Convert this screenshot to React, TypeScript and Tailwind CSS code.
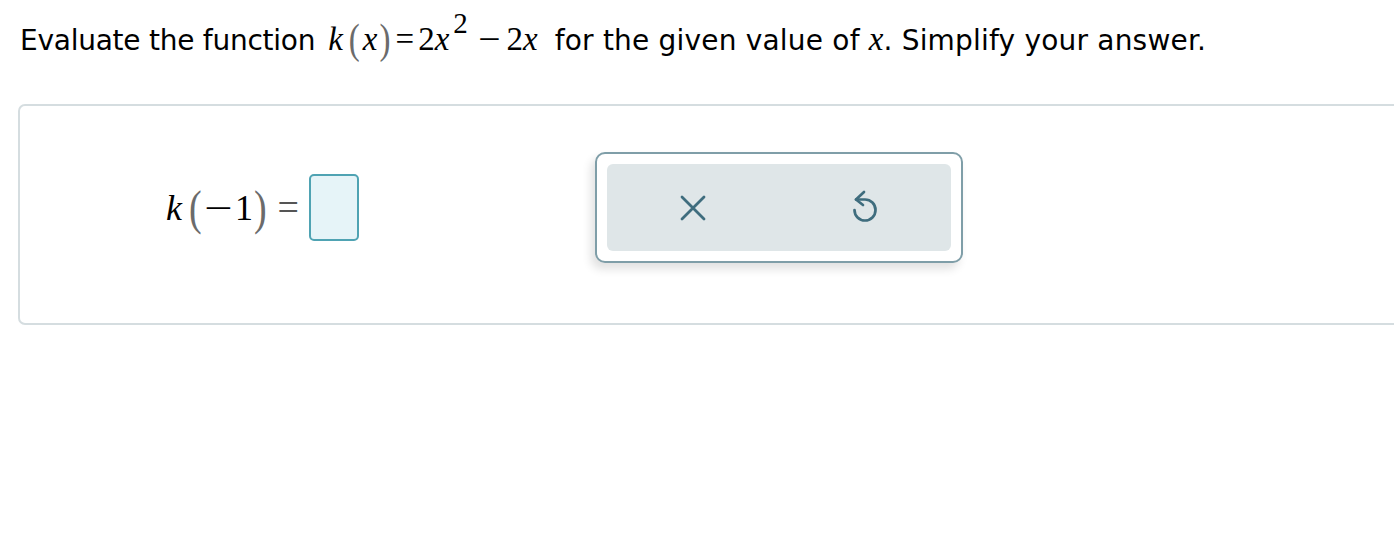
import React from 'react';

const serif = { fontFamily: '"Liberation Serif", "Times New Roman", serif' };
const sans = { fontFamily: '"DejaVu Sans", Verdana, sans-serif' };

const Paren = ({ children, className = '' }: { children: React.ReactNode; className?: string }) => (
  <span className={`inline-block text-[#6b6b6b] ${className}`}>{children}</span>
);

const ClearIcon = () => (
  <svg width="26" height="26" viewBox="0 0 26 26" fill="none" stroke="#3f6d7e" strokeWidth="2.8" strokeLinecap="round">
    <path d="M2 2 L24 24 M24 2 L2 24" />
  </svg>
);

const UndoIcon = () => (
  <svg width="36" height="40" viewBox="0 0 36 40" fill="none" stroke="#3f6d7e" strokeWidth="2.7" strokeLinecap="round" strokeLinejoin="round">
    <path d="M9 11.5 H18 A10.5 10.5 0 1 1 7.5 22" />
    <path d="M17 4 L9 11.5 L16 17" />
  </svg>
);

export default function App() {
  return (
    <div className="min-h-screen w-full overflow-hidden bg-white text-black">
      {/* question prompt */}
      <div className="h-[104px] pl-[20px] pt-[19px]">
        <p className="flex items-baseline whitespace-nowrap text-[28px] tracking-[0.2px] leading-[40px]" style={sans}>
          <span className="mr-[13px] tracking-[-0.25px]">Evaluate the function</span>
          <span className="mr-[8px] flex items-baseline text-[33px] tracking-normal" style={serif}>
            <i>k</i>
            <Paren className="ml-[6px] scale-y-[1.25]">(</Paren>
            <i className="ml-[3px]">x</i>
            <Paren className="ml-[2px] scale-y-[1.25]">)</Paren>
            <span className="ml-[5px] mr-[4px]">=</span>
            <span>2</span>
            <i>x</i>
            <span className="relative -top-[17px] ml-[4px] text-[29px]">2</span>
            <span className="ml-[12px] mr-[8px] inline-block scale-x-[1.2]">−</span>
            <span>2</span>
            <i>x</i>
          </span>
          <span>&nbsp;for the given value of&nbsp;</span>
          <i className="text-[33px] tracking-normal" style={serif}>x</i>
          <span>. Simplify your answer.</span>
        </p>
      </div>

      {/* answer panel */}
      <div className="ml-[18px] flex h-[221px] w-[1420px] items-start rounded-[7px] border-2 border-[#d5dde0] pt-[46px]">
        <div className="flex h-[111px] items-center pl-[146px]" style={serif}>
          <i className="text-[36px]">k</i>
          <Paren className="ml-[7px] scale-y-[1.3] text-[38px]">(</Paren>
          <span className="ml-[6px] inline-block scale-x-[1.4] text-[36px]">−</span>
          <span className="ml-[7px] text-[36px]">1</span>
          <Paren className="ml-[1px] scale-y-[1.3] text-[38px]">)</Paren>
          <span className="ml-[11px] text-[38px] text-[#555]">=</span>
          <div className="ml-[10px] h-[67px] w-[50px] rounded-[5px] border-2 border-[#4fa3b3] bg-[#e6f4f8]" />
        </div>

        <div className="ml-[236px] h-[111px] w-[368px] rounded-[10px] border-2 border-[#7f9ea8] bg-white p-[10px] shadow-[-4px_6px_10px_rgba(0,0,0,0.12)]">
          <div className="flex h-full rounded-[6px] bg-[#dfe6e8]">
            <button className="flex flex-1 items-center justify-center">
              <ClearIcon />
            </button>
            <button className="flex flex-1 items-center justify-center">
              <UndoIcon />
            </button>
          </div>
        </div>
      </div>
    </div>
  );
}
